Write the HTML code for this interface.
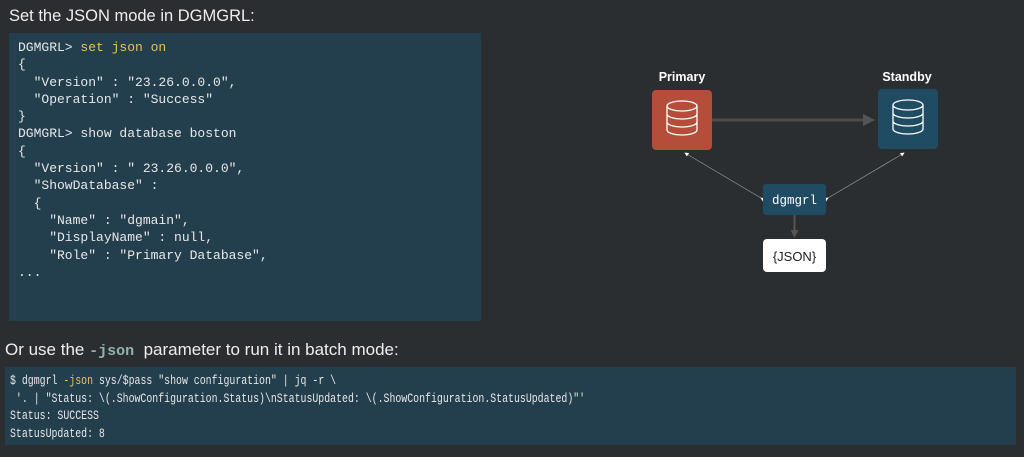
<!DOCTYPE html><html><head><style>
body{margin:0;width:1024px;height:457px;background:#2b2e30;position:relative;overflow:hidden;font-family:"Liberation Sans",sans-serif}
.t{position:absolute;color:#eee;font-size:17px}
.box{position:absolute;background:#233e4d}
pre{margin:0;font-family:"Liberation Mono",monospace;color:#e8e8e8}
.y{color:#e8c262}
</style></head><body>
<div class="t" style="left:9px;top:7px;font-size:16.5px">Set the JSON mode in DGMGRL:</div>
<div class="box" style="left:9px;top:33px;width:472px;height:288px">
<pre style="position:absolute;left:9px;top:6px;font-size:13px;line-height:17.3px">DGMGRL&gt; <span class="y">set json on</span>
{
  "Version" : "23.26.0.0.0",
  "Operation" : "Success"
}
DGMGRL&gt; show database boston
{
  "Version" : " 23.26.0.0.0",
  "ShowDatabase" :
  {
    "Name" : "dgmain",
    "DisplayName" : null,
    "Role" : "Primary Database",
...</pre></div>
<div class="t" style="left:5px;top:340px">Or use the <span style="font-family:'Liberation Mono',monospace;color:#8fb3b0;font-weight:bold;font-size:15px">-json</span>&nbsp; parameter to run it in batch mode:</div>
<div class="box" style="left:5px;top:367px;width:1011px;height:78px">
<pre style="position:absolute;left:5px;top:5px;font-size:13px;line-height:17.5px;transform:scaleX(0.76);transform-origin:top left">$ dgmgrl <span class="y">-json</span> sys/$pass "show configuration" | jq -r \
 '. | "Status: \(.ShowConfiguration.Status)\nStatusUpdated: \(.ShowConfiguration.StatusUpdated)"'
Status: SUCCESS
StatusUpdated: 8</pre></div>
<svg style="position:absolute;left:0;top:0" width="1024" height="457">
<defs><marker id="a" markerWidth="6" markerHeight="6" refX="5" refY="3" orient="auto"><path d="M0,0L6,3L0,6z" fill="#fff"/></marker>
<marker id="b" markerWidth="4" markerHeight="4" refX="3" refY="2" orient="auto"><path d="M0,0L4,2L0,4z" fill="#555"/></marker></defs>
<text x="682" y="81" fill="#fff" font-size="12.5" font-weight="bold" text-anchor="middle" font-family="Liberation Sans">Primary</text>
<text x="907" y="81" fill="#fff" font-size="12.5" font-weight="bold" text-anchor="middle" font-family="Liberation Sans">Standby</text>
<rect x="652" y="90" width="60" height="60" rx="4" fill="#b44d3a"/>
<rect x="878" y="89" width="60" height="60" rx="4" fill="#1f4b63"/>
<g fill="none" stroke="#fff" stroke-width="1.3">
<path d="M667,106a15,5 0 0 1 30,0v24a15,5 0 0 1-30,0z M667,106a15,5 0 0 0 30,0 M667,114a15,5 0 0 0 30,0 M667,122a15,5 0 0 0 30,0"/>
<path d="M893,105a15,5 0 0 1 30,0v24a15,5 0 0 1-30,0z M893,105a15,5 0 0 0 30,0 M893,113a15,5 0 0 0 30,0 M893,121a15,5 0 0 0 30,0"/>
</g>
<line x1="712" y1="120" x2="872" y2="120" stroke="#4e4a47" stroke-width="3" marker-end="url(#b)"/>
<line x1="761" y1="198" x2="685" y2="153" stroke="#999" stroke-width="0.7" marker-end="url(#a)" marker-start="url(#a)"/>
<line x1="828" y1="198" x2="904" y2="153" stroke="#999" stroke-width="0.7" marker-end="url(#a)" marker-start="url(#a)"/>
<rect x="763" y="184" width="63" height="31" rx="3" fill="#1f4b63"/>
<text x="794.5" y="204" fill="#fff" font-size="12.5" text-anchor="middle" font-family="Liberation Mono">dgmgrl</text>
<line x1="794.5" y1="215" x2="794.5" y2="236" stroke="#555" stroke-width="2" marker-end="url(#b)"/>
<rect x="763" y="239" width="63" height="33" rx="4" fill="#fff"/>
<text x="794.5" y="261" fill="#222" font-size="13" text-anchor="middle" font-family="Liberation Sans">{JSON}</text>
</svg>
</body></html>
